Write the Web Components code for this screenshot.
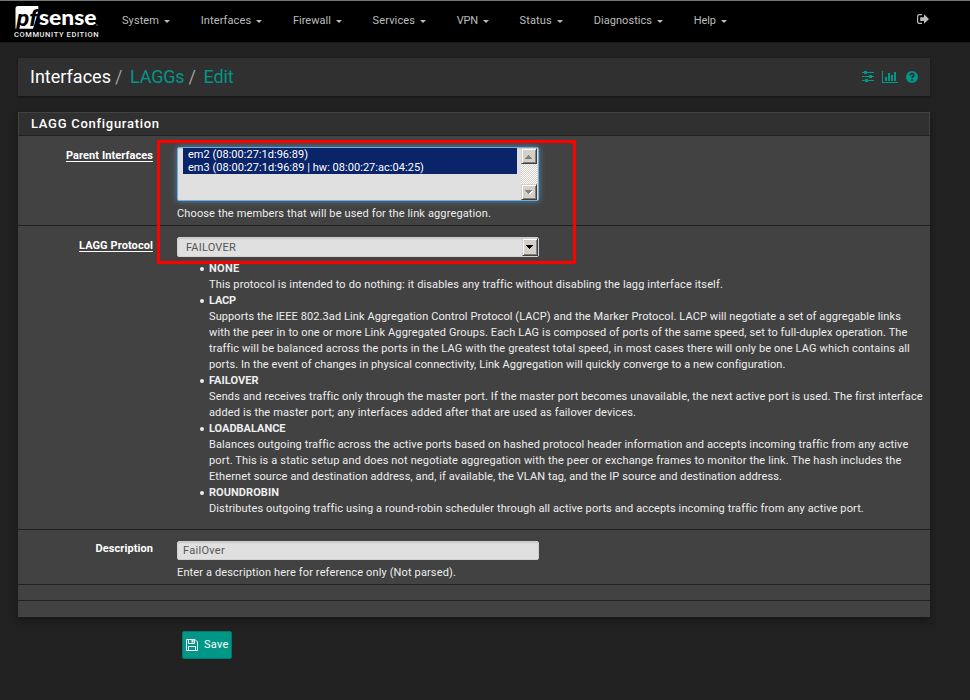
<!DOCTYPE html>
<html lang="en"><head><meta charset="utf-8"><title>pfSense - Interfaces: LAGGs: Edit</title>
<style>
html,body{margin:0;height:100%;background:#212121}
body{font:11px/16px Roboto,"Liberation Sans",sans-serif;color:#eee;overflow:hidden}
</style></head><body>
<lagg-page></lagg-page>
<script>
const define=(name,html,init)=>customElements.define(name,class extends HTMLElement{
  constructor(){super();const t=document.createElement('template');t.innerHTML=html;
    this.attachShadow({mode:'open'}).append(t.content.cloneNode(true));}
  connectedCallback(){if(init)init(this,this.shadowRoot)}
});

/* A single line whose tracking is spread so that it fills the width in "w". */
define('text-line',`<style>:host{display:block;white-space:nowrap}span{display:inline-block}</style><span><slot></slot></span>`,(h,r)=>{
  const s=r.querySelector('span'),w=+h.getAttribute('w'),n=h.textContent.length;
  if(w&&n)s.style.letterSpacing=((w-s.getBoundingClientRect().width)/n).toFixed(4)+'px';
  if(w)h.style.width=w+'px';
});

define('pf-logo',`<style>:host{display:block;width:90px;height:41px}svg{display:block}</style>
<svg width="90" height="41" viewBox="10 1 90 41">
<path d="M18 6H38.300V11L33 28.800H15.500V8.500Q15.500 6 18 6Z" fill="#fff"/>
<text x="16.500" y="25.500" font-family="Roboto,sans-serif" font-size="21.500" font-weight="700" font-style="italic" textLength="21" lengthAdjust="spacingAndGlyphs" fill="#000">pf</text>
<text x="39" y="25.300" font-family="Lato,sans-serif" font-size="21" font-weight="900" textLength="57.500" lengthAdjust="spacingAndGlyphs" fill="#fff">sense</text>
<circle cx="97" cy="25" r=".7" fill="#999"/>
<text x="14" y="37" font-family="Roboto,sans-serif" font-size="7.500" font-weight="500" textLength="84.500" fill="#eee">COMMUNITY EDITION</text>
</svg>`);

define('nav-item',`<style>:host{display:flex;align-items:center;color:#bdbdbd;gap:5px}
i{border:3px solid transparent;border-top:3px solid #bdbdbd;border-bottom:0;margin-top:0}</style><slot></slot><i></i>`);

define('nav-bar',`<style>
:host{display:flex;box-sizing:border-box;height:42px;background:#000;border-top:1px solid #757575;padding-left:10px;box-shadow:0 1px 1px #1b1b1b}
nav{display:flex;gap:30.700px;margin:12px 0 0 22px;height:16px}
svg{margin:13px 41px 0 auto}
</style><pf-logo></pf-logo><nav>
<nav-item><text-line w="37">System</text-line></nav-item>
<nav-item><text-line w="50.500">Interfaces</text-line></nav-item>
<nav-item><text-line w="38">Firewall</text-line></nav-item>
<nav-item><text-line w="42.500">Services</text-line></nav-item>
<nav-item><text-line w="21">VPN</text-line></nav-item>
<nav-item><text-line w="32.500">Status</text-line></nav-item>
<nav-item><text-line w="58.500">Diagnostics</text-line></nav-item>
<nav-item><text-line w="22">Help</text-line></nav-item>
</nav><svg width="12" height="12" viewBox="0 0 12 12"><path d="M5 .6H2.500Q.6 .6 .6 2.500V7.500Q.6 9.400 2.500 9.400H5" fill="none" stroke="#bdbdbd" stroke-width="1.200"/><path d="M3.200 3.200H7V.3L12 5 7 9.700V6.900H3.200Z" fill="#bdbdbd"/></svg>`);

define('title-bar',`<style>
:host{display:flex;box-sizing:border-box;height:38px;margin:16px 40px 0 18px;padding:0 12px;background:#303030;align-items:center;box-shadow:0 1px 2px rgba(0,0,0,.35);font-size:18px;color:#fff}
.c{display:flex;line-height:38px}em{font-style:normal;color:#9e9e9e;width:8px;margin:0 7px 0 4px}a{color:#009688}
.i{margin-left:auto;display:flex;gap:8px;align-items:center}svg{display:block}
</style><div class="c"><text-line w="81">Interfaces</text-line><em>/</em><a><text-line w="54.500">LAGGs</text-line></a><em>/</em><a><text-line w="30">Edit</text-line></a></div>
<div class="i">
<svg width="12" height="12" viewBox="0 0 12 12" fill="#009688"><path d="M0 1H12V2H0ZM0 5H12V6H0ZM0 9H12V10H0Z"/><path d="M2 0H5V3H2ZM7 4H10V7H7ZM3 8H6V11H3Z"/></svg>
<svg width="16" height="12" viewBox="0 0 16 12" fill="#009688"><path d="M0 0H1V11H16V12H0ZM3 6H5V10H3ZM6 2H8V10H6ZM9 4H11V10H9ZM12 1H14V10H12Z"/></svg>
<svg width="12" height="12" viewBox="0 0 12 12"><circle cx="6" cy="6" r="6" fill="#009688"/><path d="M4.100 4.500Q4.200 2.700 6 2.700T7.900 4.200Q7.900 5.100 6.900 5.600 6 6 6 7" fill="none" stroke="#303030" stroke-width="1.700"/><path d="M5 8H7V10H5Z" fill="#303030"/></svg></div>`);

define('form-row',`<style>
:host{display:grid;grid-template-columns:135px 1fr;column-gap:24px;box-sizing:border-box;border-bottom:1px solid #212121}
.l{justify-self:end;font-weight:700;color:#fff;padding-top:var(--lp,11px)}
::slotted([slot=label]){height:13px;line-height:16px}
:host([req]) ::slotted([slot=label]){border-bottom:1px solid #fff}
</style><div class="l"><slot name="label"></slot></div><div><slot></slot></div>`);

define('classic-button',`<style>:host{display:grid;place-items:center;box-sizing:border-box;width:16px;height:16px;background:#d4d0c8;border:1px solid;border-color:#d4d0c8 #404040 #404040 #d4d0c8;box-shadow:inset 1px 1px #fff,inset -1px -1px #808080}
svg{display:block}:host([up]) svg{transform:scaleY(-1)}
:host([off]) svg{color:#808080}:host(:not([off])) svg{color:#000}:host([off]){--hi:#fff}:host([up]){--hi:none}</style>
<svg width="8" height="5" viewBox="0 0 8 5"><path d="M1 0H8L4.500 4Z" transform="translate(.5 .8)" style="fill:var(--hi,none)"/><path d="M0 0H7V1H6V2H5V3H4V4H3V3H2V2H1V1H0Z" fill="currentColor"/></svg>`);

define('list-box',`<style>
:host{display:flex;box-sizing:border-box;width:362px;height:54px;background:#e0e0e0;border:1px solid #66afe9;border-radius:2px;box-shadow:inset 0 1px 1px rgba(0,0,0,.1),0 0 6px rgba(102,175,233,.6);padding-left:5px}
.o{width:334px;height:26px;background:#0a246a;color:#fff;line-height:13px;padding-left:5px;box-sizing:border-box}
.s{margin:0 0 0 4px;width:16px;height:52px;display:flex;flex-direction:column;justify-content:space-between;background:repeating-conic-gradient(#fff 0 25%,#d4d0c8 0 50%) 0 0/2px 2px}
</style><div class="o"><slot></slot></div><div class="s"><classic-button up off></classic-button><classic-button off></classic-button></div>`);

define('text-box',`<style>
:host{display:flex;justify-content:space-between;align-items:center;box-sizing:border-box;width:362px;height:19px;background:#e0e0e0;color:#555;border:1px solid #d0d0d0;border-radius:2px;box-shadow:inset 0 1px 1px rgba(0,0,0,.12);padding-left:5px}
:host([drop]){height:20px;padding-left:8px}:host([drop]) ::slotted(*){margin-top:2px}
classic-button{display:none}:host([drop]) classic-button{display:grid;height:18px}
</style><slot></slot><classic-button></classic-button>`);

define('protocol-item',`<style>:host{display:block;position:relative;padding-left:32px}
:host::before{content:"";position:absolute;left:23px;top:6px;width:4px;height:4px;border-radius:50%;background:#eee}
.n{font-weight:700;display:block}</style><div class="n"><slot name="name"></slot></div><slot></slot>`);

define('lagg-panel',`<style>
:host{display:block;position:relative;box-sizing:border-box;height:505px;margin:16px 40px 0 18px;background:#424242;box-shadow:0 4px 7px -1px rgba(0,0,0,.4)}
h2{box-sizing:border-box;height:24px;margin:0;padding:0 12px;border:1px solid #424242;border-bottom-color:#212121;background:#303030;color:#fff;font:500 13px/22px Roboto,sans-serif}
.a{height:90px;--lp:12px}.b{height:304px;--lp:12px}.c{height:55px}.d{height:16px}
list-box{margin-top:11px}.h{margin-top:5px}.b text-box{margin-top:11px}.c text-box{margin-top:11px}
.list{margin-top:4px}
.mark{position:absolute;left:139px;top:28px;width:413px;height:118px;border:3px solid #f00;pointer-events:none}
</style><h2><text-line w="128.500">LAGG Configuration</text-line></h2>
<form-row class="a" req><text-line slot="label" w="87">Parent Interfaces</text-line>
<list-box><text-line w="120">em2 (08:00:27:1d:96:89)</text-line><text-line w="236">em3 (08:00:27:1d:96:89 | hw: 08:00:27:ac:04:25)</text-line></list-box>
<text-line class="h" w="314">Choose the members that will be used for the link aggregation.</text-line></form-row>
<form-row class="b" req><text-line slot="label" w="74">LAGG Protocol</text-line>
<text-box drop><text-line w="50">FAILOVER</text-line></text-box>
<div class="list">
<protocol-item><text-line slot="name" w="30.500">NONE</text-line><text-line w="513">This protocol is intended to do nothing: it disables any traffic without disabling the lagg interface itself.</text-line></protocol-item>
<protocol-item><text-line slot="name" w="27">LACP</text-line><text-line w="692">Supports the IEEE 802.3ad Link Aggregation Control Protocol (LACP) and the Marker Protocol. LACP will negotiate a set of aggregable links</text-line><text-line w="698.500">with the peer in to one or more Link Aggregated Groups. Each LAG is composed of ports of the same speed, set to full-duplex operation. The</text-line><text-line w="700">traffic will be balanced across the ports in the LAG with the greatest total speed, in most cases there will only be one LAG which contains all</text-line><text-line w="576">ports. In the event of changes in physical connectivity, Link Aggregation will quickly converge to a new configuration.</text-line></protocol-item>
<protocol-item><text-line slot="name" w="49.500">FAILOVER</text-line><text-line w="712.500">Sends and receives traffic only through the master port. If the master port becomes unavailable, the next active port is used. The first interface</text-line><text-line w="427">added is the master port; any interfaces added after that are used as failover devices.</text-line></protocol-item>
<protocol-item><text-line slot="name" w="76.500">LOADBALANCE</text-line><text-line w="697.500">Balances outgoing traffic across the active ports based on hashed protocol header information and accepts incoming traffic from any active</text-line><text-line w="692.500">port. This is a static setup and does not negotiate aggregation with the peer or exchange frames to monitor the link. The hash includes the</text-line><text-line w="573">Ethernet source and destination address, and, if available, the VLAN tag, and the IP source and destination address.</text-line></protocol-item>
<protocol-item><text-line slot="name" w="70">ROUNDROBIN</text-line><text-line w="653">Distributes outgoing traffic using a round-robin scheduler through all active ports and accepts incoming traffic from any active port.</text-line></protocol-item>
</div></form-row>
<form-row class="c"><text-line slot="label" w="57.500">Description</text-line>
<text-box><text-line w="42">FailOver</text-line></text-box>
<text-line class="h" w="279">Enter a description here for reference only (Not parsed).</text-line></form-row>
<form-row class="d"></form-row>
<div class="mark"></div>`);

define('save-button',`<style>
:host{display:flex;align-items:center;gap:6px;box-sizing:border-box;width:50px;height:28px;margin:14px 0 0 182px;padding-left:3px;background:#009688;border:1px solid #00796b;border-radius:2px;color:#fff}
svg{margin-top:0}
text-line{margin-top:-1px}
</style><svg width="12" height="12" viewBox="0 0 12 12" fill="none" stroke="#fff"><path d="M.5.5H9L11.500 3V11.500H.5ZM2.500.5V4.500H8.500V.5M2.500 11.500V7.500H9.500V11.500"/><path d="M5.500 1H7.500V3.500H5.500Z" fill="#fff" stroke="none"/></svg><text-line w="24.500">Save</text-line>`);

define('lagg-page',`<style>:host{display:block;height:700px;background:#212121}</style>
<nav-bar></nav-bar><title-bar></title-bar><lagg-panel></lagg-panel><save-button></save-button>`);
</script></body></html>
